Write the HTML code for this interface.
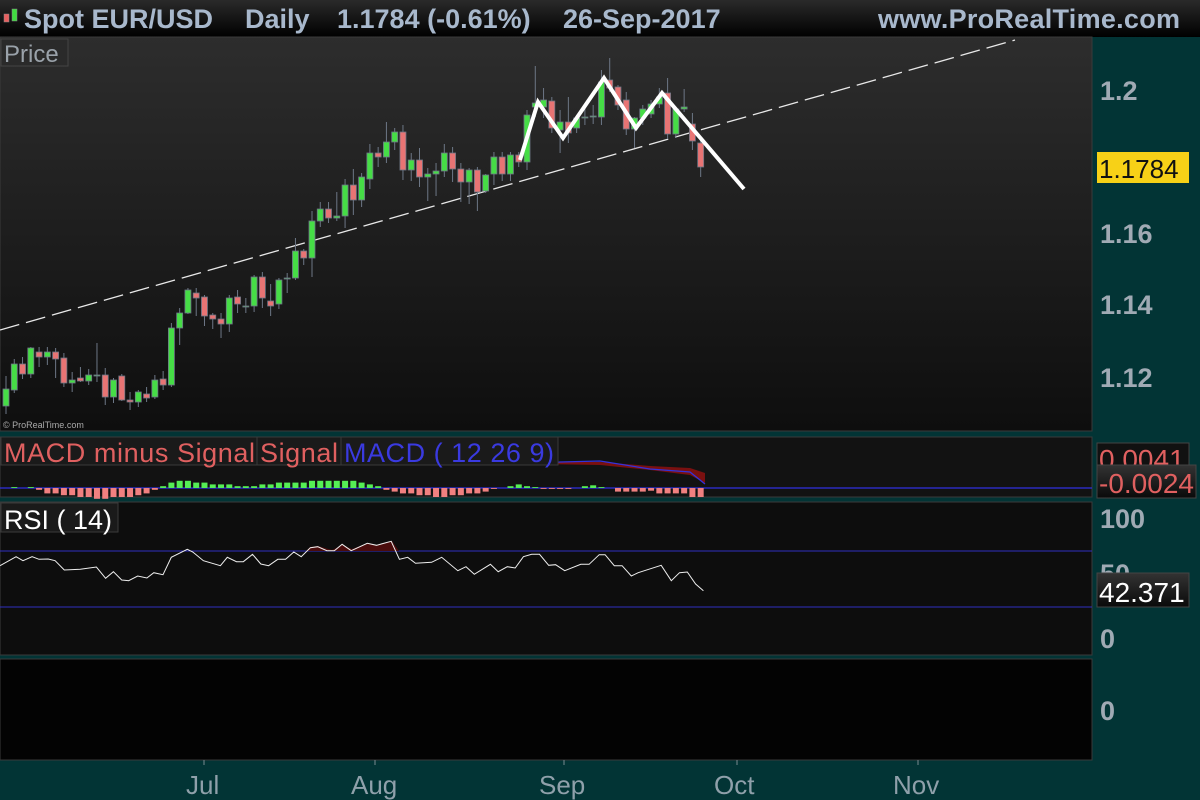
<!DOCTYPE html>
<html><head><meta charset="utf-8"><style>
html,body{margin:0;padding:0;background:#033333;width:1200px;height:800px;overflow:hidden;font-family:"Liberation Sans",sans-serif}
svg{display:block}
</style></head><body>
<svg id="s" width="1200" height="800" xmlns="http://www.w3.org/2000/svg">
<defs>
<linearGradient id="pg" x1="0" y1="0" x2="0" y2="1"><stop offset="0" stop-color="#2d2d2d"/><stop offset="1" stop-color="#0e0e0e"/></linearGradient>
<linearGradient id="hg" x1="0" y1="0" x2="0" y2="1"><stop offset="0" stop-color="#2a2a2a"/><stop offset="1" stop-color="#000"/></linearGradient>
<linearGradient id="lg" x1="0" y1="0" x2="0" y2="1"><stop offset="0" stop-color="#333"/><stop offset="1" stop-color="#0a0a0a"/></linearGradient>
</defs>
<rect x="0" y="0" width="1200" height="800" fill="#023435"/>
<rect x="0" y="0" width="1200" height="37" fill="url(#hg)"/>
<rect x="0" y="37" width="1092" height="394" fill="url(#pg)" stroke="#3a3a3a"/>
<rect x="0" y="437" width="1092" height="60" fill="#121212" stroke="#3a3a3a"/>
<rect x="0" y="502" width="1092" height="153" fill="#0d0d0d" stroke="#3a3a3a"/>
<rect x="0" y="659" width="1092" height="101" fill="#030303" stroke="#3a3a3a"/>
<g id="g"></g>
<!-- header -->
<rect x="4" y="14" width="5" height="8" fill="#e86060" stroke="#888" stroke-width="0.5"/>
<rect x="12" y="9" width="5" height="12" fill="#40dd40" stroke="#888" stroke-width="0.5"/>
<g font-weight="bold" font-size="27" fill="#a8b8cc">
<text x="24" y="28">Spot EUR/USD</text>
<text x="245" y="28">Daily</text>
<text x="337" y="28">1.1784 (-0.61%)</text>
<text x="563" y="28">26-Sep-2017</text>
<text x="878" y="28" textLength="302">www.ProRealTime.com</text>
</g>
<rect x="1" y="39" width="67" height="27" fill="#2a2a2a" stroke="#444"/>
<text x="4" y="62" font-size="24" fill="#9aa2aa">Price</text>
<text x="3" y="428" font-size="9" fill="#aaa">© ProRealTime.com</text>
<!-- right axis -->
<g font-weight="bold" font-size="27" fill="#a0aab4">
<text x="1100" y="100">1.2</text>
<text x="1100" y="243">1.16</text>
<text x="1100" y="314">1.14</text>
<text x="1100" y="387">1.12</text>
<text x="1100" y="528">100</text>
<text x="1100" y="583">50</text>
<text x="1100" y="648">0</text>
<text x="1100" y="720">0</text>
</g>
<rect x="1097" y="152" width="92" height="31" fill="#f7d117"/>
<text x="1099" y="178" font-size="26" fill="#111">1.1784</text>
<rect x="1097" y="443" width="92" height="25" fill="#111" stroke="#444"/>
<text x="1099" y="469" font-size="28" fill="#e06060">0.0041</text>
<rect x="1097" y="465" width="99" height="33" fill="url(#lg)" stroke="#444"/>
<text x="1099" y="493" font-size="28" fill="#e06060">-0.0024</text>
<rect x="1097" y="573" width="92" height="34" fill="url(#lg)" stroke="#444"/>
<text x="1099" y="602" font-size="28" fill="#fff">42.371</text>
<!-- bottom axis -->
<g font-size="26" fill="#8fa0aa">
<text x="186" y="794">Jul</text>
<text x="351" y="794">Aug</text>
<text x="539" y="794">Sep</text>
<text x="714" y="794">Oct</text>
<text x="893" y="794">Nov</text>
</g>
<g stroke="#7a8a90"><line x1="204" y1="760" x2="204" y2="765"/><line x1="375" y1="760" x2="375" y2="765"/><line x1="564" y1="760" x2="564" y2="765"/><line x1="737" y1="760" x2="737" y2="765"/><line x1="918" y1="760" x2="918" y2="765"/></g>
<!-- labels -->
<rect x="1" y="437" width="557" height="28" fill="#1a1a1a" stroke="#3a3a3a"/>
<g font-size="27"><text x="4" y="462" fill="#e06060" textLength="251">MACD minus Signal</text><text x="260" y="462" fill="#e06060" textLength="78">Signal</text><text x="344" y="462" fill="#3a3ae0" textLength="210">MACD ( 12 26 9)</text></g>
<line x1="257" y1="437" x2="257" y2="465" stroke="#3a3a3a"/><line x1="341" y1="437" x2="341" y2="465" stroke="#3a3a3a"/>
<rect x="1" y="503" width="117" height="29" fill="#1a1a1a" stroke="#3a3a3a"/>
<text x="4" y="529" font-size="27" fill="#fff">RSI ( 14)</text>
</svg>
<script>
var g=document.getElementById('g'),h='';
h+='<line x1="0" y1="330" x2="1015" y2="40" stroke="#e8e8e8" stroke-width="1.3" stroke-dasharray="20,7"/>';
var C=[[389,406,1,376,414],[364,390,1,359,393],[364,374,0,357,379],[348,374,1,347,378],[352,357,0,347,367],[352,357,1,347,365],[352,359,0,348,378],[358,383,0,353,387],[380,383,1,372,392],[378,381,0,367,382],[375,381,1,369,385],[375,376,1,343,382],[375,397,0,368,405],[380,397,1,378,403],[376,400,0,374,401],[400,402,0,392,410],[392,402,1,390,407],[394,398,0,387,402],[380,397,1,375,399],[379,385,0,371,390],[328,385,1,323,387],[313,328,1,308,345],[290,313,1,288,314],[293,298,0,288,316],[297,316,0,295,326],[315,319,0,313,329],[319,324,0,313,338],[298,324,1,295,332],[297,304,0,290,313],[306,307,1,298,313],[277,306,1,275,312],[277,298,0,272,308],[301,306,0,284,316],[280,304,1,278,309],[278,279,1,273,293],[251,278,1,238,280],[251,258,0,249,265],[221,258,1,211,277],[209,221,1,202,227],[209,218,0,202,223],[216,218,1,192,221],[185,216,1,179,228],[185,200,0,169,215],[177,200,1,173,207],[153,179,1,144,189],[153,157,0,147,167],[142,157,1,122,163],[132,142,1,128,150],[132,170,0,125,180],
[160,170,1,153,181],[160,177,0,148,187],[174,177,1,168,201],[171,174,1,163,196],[153,171,1,144,177],[153,169,0,147,182],[169,182,0,163,202],[170,182,1,168,204],[170,192,0,167,211],[175,191,1,174,193],[157,174,1,152,185],[157,174,0,152,181],[155,174,1,152,181],[155,162,0,152,167],[115,162,1,110,170],[103,107,1,66,117],[100,107,1,88,118],[101,128,0,97,133],[122,130,1,110,153],[122,133,0,97,143],[118,128,1,115,133],[117,118,1,105,125],[116,117,1,105,124],[82,117,1,70,125],[80,88,0,58,92],[87,105,0,85,110],[100,129,0,92,135],[118,129,1,117,148],[109,118,1,105,125],[104,114,1,100,118],[97,104,1,88,108],[93,134,0,78,139],[109,134,1,107,138],[107,109,1,89,112],[124,141,0,113,150],[143,167,0,138,177]];
function X(i){return 6+i*8.27}
C.forEach(function(c,i){var x=X(i);
h+='<line x1="'+x+'" y1="'+c[3]+'" x2="'+x+'" y2="'+c[4]+'" stroke="#6d7786" stroke-width="1"/>';
h+='<rect x="'+(x-3)+'" y="'+c[0]+'" width="6" height="'+Math.max(1,c[1]-c[0])+'" fill="'+(c[2]?'#46dd46':'#e87474')+'" stroke="#6d7786" stroke-width="0.8"/>';});
h+='<polyline points="520,160 538,102 563,138 604,78 636,128 662,93 744,189" fill="none" stroke="#fff" stroke-width="4" stroke-linejoin="miter"/>';
h+='<path d="M540,462 L600,462 L650,466 L690,468 L705,473 L705,483 L690,475 L650,470 L600,465 L540,464Z" fill="#7a1010"/>';
h+='<polyline points="540,464 560,462 600,461 650,469 690,472 705,484" fill="none" stroke="#3333dd" stroke-width="1.3"/>';
h+='<line x1="0" y1="488" x2="1092" y2="488" stroke="#3030e0" stroke-width="1.2"/>';
var H=[0,0.5,0,0.5,-1,-3,-3,-4,-4,-5,-5,-6,-6,-5,-5,-5,-4,-3,-1,1,3,4,4,3,3,2,2,2,1,1,1,2,2,3,3,3,3,4,4,4,4,4,4,3,2,1,-1,-2,-3,-3,-4,-4,-5,-5,-4,-4,-3,-3,-2,-0.5,0,1,2,1,0.5,-0.5,-0.5,-0.5,-0.5,0,1,1.5,0.5,0,-2,-2,-2,-2,-1.5,-3,-3,-3,-3,-5,-5];
H.forEach(function(v,i){var x=X(i);var hh=v*1.8;
if(v>=0)h+='<rect x="'+(x-3)+'" y="'+(488-hh)+'" width="6" height="'+hh+'" fill="#55ee55"/>';
else h+='<rect x="'+(x-3)+'" y="488" width="6" height="'+(-hh)+'" fill="#f08080"/>';});
h+='<line x1="0" y1="551" x2="1092" y2="551" stroke="#3030c0"/><line x1="0" y1="607" x2="1092" y2="607" stroke="#3030c0"/>';
var R=[0,437,35,410,50,422,70,410,85,418,105,417,120,422,140,450,175,448,210,441,230,475,247,455,265,480,280,482,300,468,320,474,335,458,355,464,373,412,408,388,420,396,443,422,480,437,495,412,515,425,530,425,550,403,568,432,585,437,605,418,622,418,640,396,656,410,676,383,692,380,712,392,728,392,745,373,765,392,800,370,820,376,852,364,870,418,888,412,905,430,940,427,962,412,997,452,1015,440,1033,463,1068,433,1085,455,1105,440,1122,444,1140,410,1158,403,1175,403,1195,436,1210,434,1230,452,1265,433,1283,433,1305,404,1318,404,1338,437,1355,437,1375,468,1390,458,1440,436,1462,482,1480,458,1497,456,1515,492,1532,512];
var p=[];for(var i=0;i<R.length;i+=2)p.push((R[i]/2.178).toFixed(1)+','+(420+R[i+1]/3).toFixed(1));
h+='<path d="M306,551 L310,547 L318,546 L332,550 L342,545 L352,549 L368,543 L377,545 L392,541 L399,551 Z" fill="#4a0c0c"/>';
h+='<polyline points="'+p.join(' ')+'" fill="none" stroke="#eee" stroke-width="1"/>';
g.innerHTML=h;
</script>
</body></html>
